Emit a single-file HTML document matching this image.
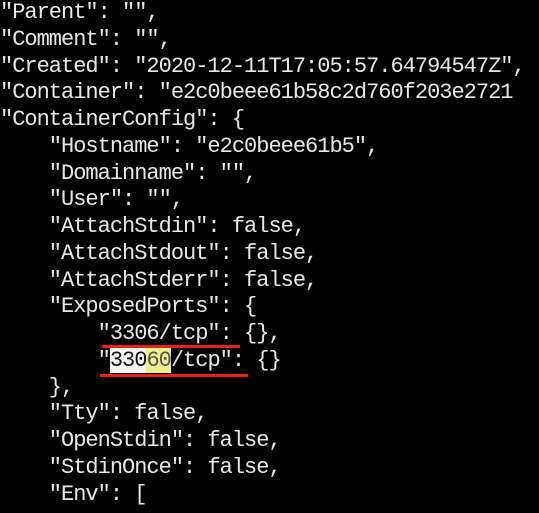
<!DOCTYPE html>
<html><head><style>
html,body{margin:0;padding:0;background:#000;width:539px;height:513px;overflow:hidden}
pre{margin:0;position:absolute;left:0;top:0;font-family:"Liberation Mono",monospace;font-size:22px;letter-spacing:-1px;line-height:26.75px;color:#e8e8e8;white-space:pre}
.hl{background:#f4f4f4;color:#111}
.y{background:#f0f090;color:#555}
.r{position:absolute;height:3px;background:#e8221b}
</style></head><body>
<pre>"Parent": "",
"Comment": "",
"Created": "2020-12-11T17:05:57.64794547Z",
"Container": "e2c0beee61b58c2d760f203e2721
"ContainerConfig": {
    "Hostname": "e2c0beee61b5",
    "Domainname": "",
    "User": "",
    "AttachStdin": false,
    "AttachStdout": false,
    "AttachStderr": false,
    "ExposedPorts": {
        "3306/tcp": {},
        "<span class="hl">330</span><span class="y">60</span>/tcp": {}
    },
    "Tty": false,
    "OpenStdin": false,
    "StdinOnce": false,
    "Env": [</pre>
<div class="r" style="left:102px;top:345px;width:138px"></div>
<div class="r" style="left:100px;top:374px;width:148px"></div>
</body></html>
